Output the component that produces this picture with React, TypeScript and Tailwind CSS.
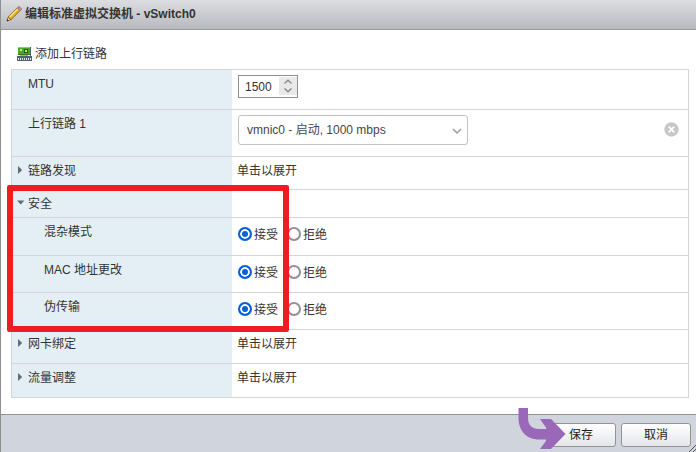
import React from "react";

const PencilIcon = () => (
  <svg className="h-4 w-4 shrink-0" viewBox="0 0 16 16">
    <path d="M2.2 11 11.3 1.9 14 4.6 4.9 13.7z" fill="#f2ab17" stroke="#7a5414" strokeWidth=".8" />
    <path d="M3.4 11.2 12 2.8" stroke="#ffe98c" strokeWidth="1.3" />
    <path d="m11.3 1.9 1-1c.4-.4 1-.4 1.4 0l1.4 1.4c.4.4.4 1 0 1.4l-1 1z" fill="#d98a96" stroke="#7c5a62" strokeWidth=".7" />
    <path d="M11 2.2 13.8 5" stroke="#9aa0ac" strokeWidth=".9" />
    <path d="M.9 15 2.2 11l2.7 2.7z" fill="#f4dcae" stroke="#6b4a12" strokeWidth=".7" />
    <path d="m.7 15.2.7-2 1.4 1.4z" fill="#222" />
  </svg>
);

const NicIcon = () => (
  <svg className="h-[15px] w-[15px] shrink-0" viewBox="0 0 15 15" shapeRendering="crispEdges">
    <rect x="1" y="0" width="12" height="8" fill="#4aa52c" />
    <rect x="1" y="0" width="12" height="1" fill="#8ad05a" />
    <rect x="1" y="7" width="12" height="1" fill="#2f7a22" />
    <rect x="3" y="2" width="2" height="2" fill="#c9ec8e" />
    <rect x="7" y="2" width="4" height="4" fill="#1e5f1c" />
    <rect x="8" y="3" width="2" height="2" fill="#d8d97a" />
    <rect x="13" y="0" width="1" height="9" fill="#59636e" />
    <rect x="3" y="8" width="8" height="1" fill="#d0ab32" />
    <rect x="0" y="9" width="15" height="5" fill="#55616f" />
    <path d="M1 11h1v2H1zM3 11h1v2H3zM5 11h1v2H5zM7 11h1v2H7zM9 11h1v2H9zM11 11h1v2h-1zM13 11h1v2h-1z" fill="#e3e8ee" />
  </svg>
);

const Twisty = ({ open }: { open?: boolean }) => (
  <svg className="mt-[3px] h-2 w-2 shrink-0" viewBox="0 0 8 8">
    <path d={open ? "M0 1.5h7.4L3.7 5.5z" : "M1 0v8L5.2 4z"} fill="#636a70" />
  </svg>
);

type RowProps = {
  label: string;
  className: string;
  htmlFor?: string;
  nested?: boolean;
  children?: React.ReactNode;
};

const Row = ({ label, className, htmlFor, nested, children }: RowProps) => (
  <div className={`flex border-b border-[#d3d5d7] ${className}`}>
    <div className={`w-[220px] shrink-0 bg-[#e4eff5] pt-[6px] ${nested ? "pl-8" : "pl-4"}`}>
      {htmlFor ? <label htmlFor={htmlFor}>{label}</label> : label}
    </div>
    <div className="flex min-w-0 flex-1 items-start pr-[9px] pl-[6px]">{children}</div>
  </div>
);

const ToggleRow = ({ label, open, className }: { label: string; open?: boolean; className: string }) => (
  <div className={`flex border-b border-[#d3d5d7] ${className}`}>
    <button
      type="button"
      aria-expanded={!!open}
      className="flex w-[220px] shrink-0 items-start gap-[3px] bg-[#e4eff5] pt-[6px] pl-[5px] text-left"
    >
      <Twisty open={open} />
      {label}
    </button>
    <div className="flex-1 pt-[6px] pl-[5px]">{open ? null : "单击以展开"}</div>
  </div>
);

const policies = [
  { id: "promiscuous", label: "混杂模式", className: "h-[38px]" },
  { id: "mac-changes", label: "MAC 地址更改", className: "h-[37px]" },
  { id: "forged", label: "伪传输", className: "h-[37px]" },
];

const radioClass =
  "h-3.5 w-3.5 appearance-none rounded-full border-2 border-[#8f8f9d] bg-white checked:border-[#0060df] checked:bg-[#0060df] checked:shadow-[inset_0_0_0_2px_#fff]";

const PolicyRadios = ({ name, label }: { name: string; label: string }) => (
  <div role="radiogroup" aria-label={label} className="flex gap-[9px] pt-2">
    <label className="flex items-start gap-[2px] leading-[18px]">
      <input type="radio" name={name} defaultChecked className={`mt-px ${radioClass}`} />
      接受
    </label>
    <label className="flex items-start gap-[2px] leading-[18px]">
      <input type="radio" name={name} className={`mt-px ${radioClass}`} />
      拒绝
    </label>
  </div>
);

const buttonClass =
  "h-6 w-[70px] rounded-[3px] border border-[#949494] bg-gradient-to-b from-white to-[#e4e6ea] text-center text-[#222]";

export default function App() {
  return (
    <div className="border-l border-[#8f8f8f] bg-white font-['Liberation_Sans','Noto_Sans_CJK_SC',sans-serif] text-[12px] leading-4 text-[#333]">
      <header className="flex h-[30px] items-center gap-[3px] border-b border-[#98989c] bg-gradient-to-b from-[#dcdde1] to-[#b9babf] pb-[2px] pl-[5px]">
        <PencilIcon />
        <h1 className="font-bold">编辑标准虚拟交换机 - vSwitch0</h1>
      </header>

      <main className="pr-[7px] pb-4 pl-[10px]">
        <button type="button" className="flex h-[39px] items-center gap-[3px] pt-[9px] pl-[6px]">
          <NicIcon />
          添加上行链路
        </button>

        <div className="border border-b-0 border-[#d3d5d7]">
          <Row label="MTU" htmlFor="mtu" className="h-10">
            <div className="relative mt-[5px]">
              <input
                id="mtu"
                type="text"
                inputMode="numeric"
                defaultValue="1500"
                className="h-[23px] w-[60px] border border-[#8f8f8f] bg-white pl-[6px]"
              />
              <span className="pointer-events-none absolute top-[2px] right-px flex h-[18px] w-[18px] items-center justify-center bg-[#e9e9ea]">
                <svg className="h-3.5 w-2" viewBox="0 0 8 14" fill="none" stroke="#8a8a90" strokeWidth="1.5">
                  <path d="M.5 4.5 4 1.2 7.5 4.5M.5 9.5 4 12.8 7.5 9.5" />
                </svg>
              </span>
            </div>
          </Row>

          <Row label="上行链路 1" htmlFor="uplink" className="h-[47px]">
            <div className="relative mt-[5px]">
              <select
                id="uplink"
                className="h-[30px] w-[230px] appearance-none rounded-[3px] border border-[#c0c2c8] bg-white pl-2 text-[#45464d]"
              >
                <option>vmnic0 - 启动, 1000 mbps</option>
              </select>
              <svg
                className="pointer-events-none absolute top-3 right-[6px] h-2 w-2.5"
                viewBox="0 0 10 8"
                fill="none"
                stroke="#9b9ca3"
                strokeWidth="1.5"
              >
                <path d="M1 2 5 6 9 2" />
              </svg>
            </div>
            <button type="button" aria-label="移除" className="mt-3 ml-auto">
              <svg className="h-[15px] w-[15px]" viewBox="0 0 15 15">
                <circle cx="7.5" cy="7.5" r="7.2" fill="#c6c7cb" />
                <path d="m4.7 4.7 5.6 5.6M10.3 4.7l-5.6 5.6" stroke="#fff" strokeWidth="1.7" />
              </svg>
            </button>
          </Row>

          <ToggleRow label="链路发现" className="h-[33px]" />

          <section className="relative">
            <ToggleRow label="安全" open className="h-7" />
            {policies.map((policy) => (
              <Row key={policy.id} label={policy.label} nested className={policy.className}>
                <PolicyRadios name={policy.id} label={policy.label} />
              </Row>
            ))}
            {/* highlight around the security settings */}
            <div className="pointer-events-none absolute -top-[5px] -bottom-[2px] -left-[5px] w-[282px] rounded-[2px] border-[6px] border-[#f01c24]" />
          </section>

          <ToggleRow label="网卡绑定" className="h-[34px]" />
          <ToggleRow label="流量调整" className="h-[34px]" />
        </div>
      </main>

      <footer className="relative flex h-[38px] justify-end gap-[5px] border-t border-[#8f9196] bg-[#d0d4dc] pt-2 pr-[5px]">
        <button type="submit" className={buttonClass}>保存</button>
        <button type="button" className={buttonClass}>取消</button>
        <svg
          className="pointer-events-none absolute -top-2 right-[130px] h-[43px] w-12"
          viewBox="0 0 48 43"
        >
          <path
            d="M.5 1H10v10C10 18 14 22 21 22H29L22 12H33L47.5 27 33 42H22L29 32.5H21C9 32.5 .5 24 .5 11z"
            fill="#9a68b8"
          />
        </svg>
        <svg className="absolute right-0 bottom-0 h-2 w-2" viewBox="0 0 8 8" stroke="#555" strokeWidth="1">
          <path d="M1 8 8 1M5 8 8 5" />
        </svg>
      </footer>
    </div>
  );
}
